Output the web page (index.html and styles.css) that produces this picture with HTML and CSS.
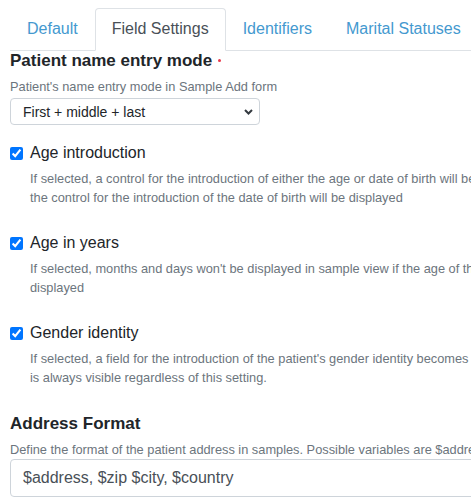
FILE: index.html
```html
<!DOCTYPE html>
<html>
<head>
<meta charset="utf-8">
<link rel="stylesheet" href="styles.css">
</head>
<body>
<div class="page">
  <nav class="tabs">
    <a class="tab">Default</a>
    <a class="tab active">Field Settings</a>
    <a class="tab">Identifiers</a>
    <a class="tab">Marital Statuses</a>
  </nav>

  <section class="field">
    <h3 class="field-title">Patient name entry mode<span class="required"></span></h3>
    <div class="help">Patient's name entry mode in Sample Add form</div>
    <div class="select">
      <span class="select-value">First + middle + last</span>
      <svg class="chevron" width="9" height="6" viewBox="0 0 9 6"><path d="M1 1 L4.5 4.5 L8 1" fill="none" stroke="#343a40" stroke-width="2"/></svg>
    </div>
  </section>

  <section class="check-field">
    <label class="check-label"><input type="checkbox" checked> Age introduction</label>
    <div class="desc">If selected, a control for the introduction of either the age or date of birth will be displayed in Sample Add form. Otherwise, only<br>the control for the introduction of the date of birth will be displayed</div>
  </section>

  <section class="check-field">
    <label class="check-label"><input type="checkbox" checked> Age in years</label>
    <div class="desc">If selected, months and days won't be displayed in sample view if the age of the patient is greater than one year. Only years will be<br>displayed</div>
  </section>

  <section class="check-field">
    <label class="check-label"><input type="checkbox" checked> Gender identity</label>
    <div class="desc">If selected, a field for the introduction of the patient's gender identity becomes visible in Sample Add form. The gender identity field<br>is always visible regardless of this setting.</div>
  </section>

  <section class="field address">
    <h3 class="field-title">Address Format</h3>
    <div class="help">Define the format of the patient address in samples. Possible variables are $address, $zip, $city, $district, $state, $country</div>
    <div class="text-input">$address, $zip $city, $country</div>
  </section>
</div>
</body>
</html>
```

FILE: styles.css
```css
html, body {
  margin: 0;
  padding: 0;
  overflow: hidden;
  background: #fff;
}

body {
  font-family: "Liberation Sans", Arial, sans-serif;
  color: #212529;
}

.page {
  padding: 8px 0 0 10px;
  width: 760px;
}

.tabs {
  display: flex;
  border-bottom: 1px solid #dee2e6;
}

.tab {
  font-size: 16px;
  line-height: 24px;
  padding: 8px 16px 9px;
  border: 1px solid transparent;
  border-radius: 4px 4px 0 0;
  margin-bottom: -1px;
  color: #4499cf;
  white-space: nowrap;
}

.tab.active {
  color: #495057;
  background: #fff;
  border-color: #dee2e6 #dee2e6 #fff;
}

.field-title {
  margin: 0;
  font-size: 17px;
  line-height: 20px;
  font-weight: bold;
  color: #212529;
}

.required {
  display: inline-block;
  width: 3px;
  height: 3px;
  border-radius: 50%;
  background: #e8394b;
  margin-left: 6px;
  vertical-align: 4px;
}

.help {
  margin-top: 6px;
  font-size: 12.8px;
  line-height: 19.2px;
  color: #6c757d;
  white-space: nowrap;
}

.select {
  margin-top: 2px;
  width: 250px;
  height: 27px;
  box-sizing: border-box;
  border: 1px solid #ced4da;
  border-radius: 4px;
  display: flex;
  align-items: center;
  justify-content: space-between;
  padding: 0 6px 0 12px;
  font-size: 14px;
  color: #212529;
}

.chevron {
  display: block;
}

.check-field {
  margin-top: 16px;
}

.check-field + .check-field {
  margin-top: 24px;
}

.check-label {
  display: flex;
  align-items: center;
  font-size: 16px;
  line-height: 24px;
  color: #212529;
  gap: 7px;
}

.check-label input {
  margin: 0;
  width: 13px;
  height: 13px;
}

.desc {
  margin-top: 4px;
  padding-left: 20px;
  font-size: 12.8px;
  line-height: 19px;
  color: #6c757d;
  white-space: nowrap;
}

.address {
  margin-top: 27px;
}

.address .help {
  margin-top: 6px;
}

.text-input {
  margin-top: 0;
  width: 720px;
  height: 38px;
  box-sizing: border-box;
  border: 1px solid #ced4da;
  border-radius: 4px;
  padding: 6px 12px;
  font-size: 16px;
  line-height: 24px;
  color: #495057;
}
```
